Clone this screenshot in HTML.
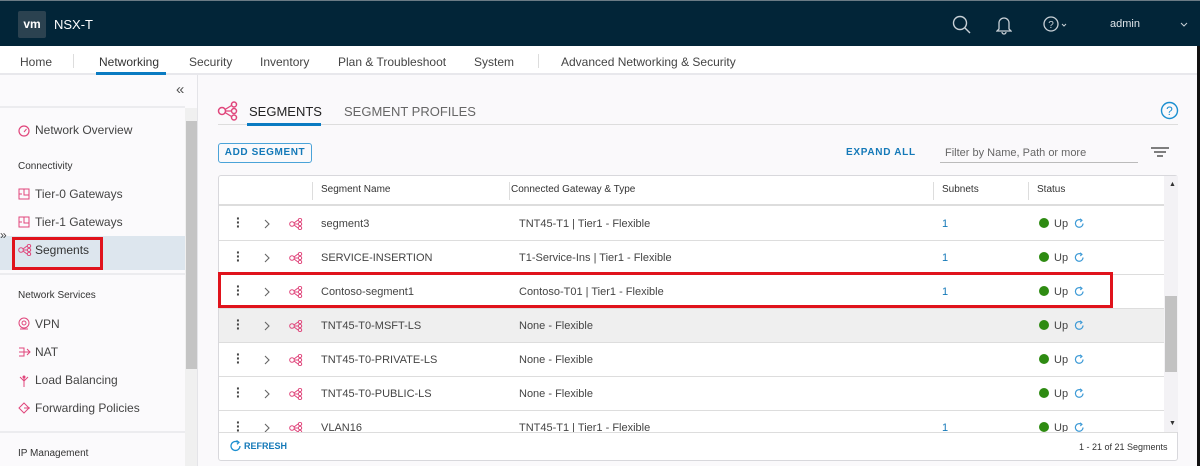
<!DOCTYPE html>
<html><head><meta charset="utf-8"><style>
*{margin:0;padding:0;box-sizing:border-box}
body{width:1200px;height:466px;overflow:hidden;background:#faf9fb;font-family:"Liberation Sans",sans-serif;position:relative;color:#333}
.a{position:absolute}
.hdr{left:0;top:0;width:1200px;height:46px;background:#022538;border-top:1px solid #6b7b85}
.nav{left:0;top:46px;width:1200px;height:29px;background:#fff;border-bottom:2px solid #e8e8ec}
.nav span{position:absolute;top:9px;font-size:12px;color:#444}
.side{left:0;top:75px;width:198px;height:391px;background:#fbfafc;border-right:1px solid #e4e4e8}
.si{position:absolute;font-size:12px;color:#444;left:35px}
.sh{position:absolute;font-size:10px;color:#333;left:18px}
.ic{position:absolute;left:18px}
.tbl{left:218px;top:175px;width:960px;height:286px;background:#fff;border:1px solid #d8d8dc;border-radius:3px}
.row{position:absolute;left:0;width:945px;height:34px;border-bottom:1px solid #ddd;font-size:11px;color:#444}
.row span{position:absolute;top:11px}
.dots{left:17px;top:9px!important;font-size:14px;line-height:4px;font-weight:bold;width:4px}
.g{display:inline-block;width:10px;height:10px;border-radius:50%;background:#2e8b12;vertical-align:-1px;margin-right:5px}
</style></head><body>
<div class="a hdr">
 <div class="a" style="left:18px;top:10px;width:28px;height:27px;background:#2b4250;border-radius:2px;color:#fff;font-weight:bold;font-size:12px;text-align:center;line-height:27px">vm</div>
 <div class="a" style="left:54px;top:16px;color:#fff;font-size:13px">NSX-T</div>
 <svg class="a" style="left:952px;top:14px" width="20" height="20"><circle cx="8" cy="8" r="6.5" fill="none" stroke="#c8d0d6" stroke-width="1.4"/><line x1="12.5" y1="12.5" x2="18" y2="18" stroke="#c8d0d6" stroke-width="1.4"/></svg>
 <svg class="a" style="left:996px;top:14px" width="16" height="20"><path d="M3 14 V8 A5 5 0 0 1 13 8 V14 L15 16 H1 Z M6 17 A2 2 0 0 0 10 17" fill="none" stroke="#c8d0d6" stroke-width="1.3"/></svg>
 <svg class="a" style="left:1043px;top:15px" width="28" height="18"><circle cx="8" cy="8" r="7" fill="none" stroke="#c8d0d6" stroke-width="1.3"/><text x="8" y="12" font-size="10" fill="#c8d0d6" text-anchor="middle" font-family="Liberation Sans">?</text><path d="M19 8 l2 2 l2 -2" fill="none" stroke="#c8d0d6"/></svg>
 <div class="a" style="left:1110px;top:17px;color:#dfe5e9;font-size:11px">admin</div>
 <svg class="a" style="left:1180px;top:21px" width="8" height="6"><path d="M1 1 l3 3 l3 -3" fill="none" stroke="#c8d0d6"/></svg>
</div>
<div class="a nav">
 <span style="left:20px">Home</span>
 <div class="a" style="left:73px;top:8px;width:1px;height:14px;background:#ddd"></div>
 <span style="left:99px;color:#333">Networking</span>
 <div class="a" style="left:96px;top:26px;width:70px;height:3px;background:#0a7bc2"></div>
 <span style="left:189px">Security</span>
 <span style="left:260px">Inventory</span>
 <span style="left:338px">Plan &amp; Troubleshoot</span>
 <span style="left:474px">System</span>
 <div class="a" style="left:538px;top:8px;width:1px;height:14px;background:#ddd"></div>
 <span style="left:561px">Advanced Networking &amp; Security</span>
</div>
<div class="a" style="left:1197px;top:46px;width:3px;height:420px;background:#111"></div>
<div class="a side">
 <div class="a" style="left:176px;top:6px;font-size:15px;color:#555">«</div>
 <div class="a" style="left:0;top:31px;width:185px;height:2px;background:#ececef"></div>
 <div class="a" style="left:185px;top:33px;width:12px;height:358px;background:#f0f0f0"></div>
 <div class="a" style="left:186px;top:46px;width:11px;height:248px;background:#c4c4c4"></div>
 <svg class="ic" style="top:50px" width="12" height="12"><circle cx="6" cy="6" r="5" fill="none" stroke="#e0457b" stroke-width="1.2"/><line x1="6" y1="7" x2="8.5" y2="4" stroke="#e0457b"/></svg>
 <div class="si" style="top:48px">Network Overview</div>
 <div class="sh" style="top:86px">Connectivity</div>
 <svg class="ic" style="top:113px" width="12" height="12"><rect x="1" y="1" width="10" height="10" fill="none" stroke="#e0457b"/><path d="M6 1v6h5M1 6h3" fill="none" stroke="#e0457b"/></svg>
 <div class="si" style="top:112px">Tier-0 Gateways</div>
 <svg class="ic" style="top:141px" width="12" height="12"><rect x="1" y="1" width="10" height="10" fill="none" stroke="#e0457b"/><path d="M6 1v6h5M1 6h3" fill="none" stroke="#e0457b"/></svg>
 <div class="si" style="top:140px">Tier-1 Gateways</div>
 <div class="a" style="left:0;top:161px;width:185px;height:34px;background:#dde6ee"></div>
 <div class="a" style="left:0;top:153px;font-size:12px;color:#444">»</div>
 <div class="a" style="left:12px;top:162px;width:91px;height:33px;border:3px solid #e0131c"></div>
 <svg class="ic" style="top:169px" width="14" height="12"><circle cx="3" cy="6" r="2.3" fill="none" stroke="#e0457b"/><circle cx="11" cy="2" r="1.7" fill="none" stroke="#e0457b"/><circle cx="11" cy="6" r="1.7" fill="none" stroke="#e0457b"/><circle cx="11" cy="10" r="1.7" fill="none" stroke="#e0457b"/><path d="M5 6h4M5 5l4-3M5 7l4 3" stroke="#e0457b" fill="none"/></svg>
 <div class="si" style="top:168px;color:#333">Segments</div>
 <div class="a" style="left:0;top:198px;width:185px;height:2px;background:#ececef"></div>
 <div class="sh" style="top:215px">Network Services</div>
 <svg class="ic" style="top:242px" width="12" height="13"><circle cx="6" cy="6" r="5" fill="none" stroke="#e0457b"/><circle cx="6" cy="6" r="2" fill="none" stroke="#e0457b"/><path d="M2 12h8" stroke="#e0457b"/></svg>
 <div class="si" style="top:242px">VPN</div>
 <svg class="ic" style="top:271px" width="13" height="12"><path d="M1 2h5v8H1M1 6h11M9 3l3 3l-3 3" fill="none" stroke="#e0457b"/></svg>
 <div class="si" style="top:270px">NAT</div>
 <svg class="ic" style="top:299px" width="12" height="13"><path d="M6 4v9M6 7l-4-4M6 7l4-4" fill="none" stroke="#e0457b"/><circle cx="6" cy="3" r="1.5" fill="#e0457b"/></svg>
 <div class="si" style="top:298px">Load Balancing</div>
 <svg class="ic" style="top:327px" width="13" height="13"><path d="M6 1l5 5l-5 5l-5-5zM6 6h6" fill="none" stroke="#e0457b"/></svg>
 <div class="si" style="top:326px">Forwarding Policies</div>
 <div class="a" style="left:0;top:356px;width:185px;height:2px;background:#ececef"></div>
 <div class="sh" style="top:373px">IP Management</div>
</div>
<svg class="a" style="left:217px;top:101px" width="22" height="20"><circle cx="5" cy="10" r="3.5" fill="none" stroke="#e0457b" stroke-width="1.5"/><circle cx="17" cy="3.5" r="2.5" fill="none" stroke="#e0457b" stroke-width="1.5"/><circle cx="17" cy="10" r="2.5" fill="none" stroke="#e0457b" stroke-width="1.5"/><circle cx="17" cy="16.5" r="2.5" fill="none" stroke="#e0457b" stroke-width="1.5"/><path d="M8.5 10h6M8 8.5l6.5-4M8 11.5l6.5 4" stroke="#e0457b" stroke-width="1.3" fill="none"/></svg>
<div class="a" style="left:249px;top:104px;font-size:13px;color:#222">SEGMENTS</div>
<div class="a" style="left:344px;top:104px;font-size:13px;color:#666">SEGMENT PROFILES</div>
<div class="a" style="left:218px;top:124px;width:960px;height:1px;background:#ddd"></div>
<div class="a" style="left:247px;top:123px;width:74px;height:3px;background:#0a7bc2"></div>
<svg class="a" style="left:1160px;top:101px" width="19" height="19"><circle cx="9.5" cy="9.5" r="8" fill="none" stroke="#1b8fd0" stroke-width="1.4"/><text x="9.5" y="14" font-size="12" fill="#1b8fd0" text-anchor="middle" font-family="Liberation Sans">?</text></svg>
<div class="a" style="left:218px;top:143px;width:94px;height:20px;border:1px solid #4aa3d8;border-radius:3px;font-size:10px;font-weight:bold;letter-spacing:.6px;color:#1479b8;text-align:center;line-height:18px">ADD SEGMENT</div>
<div class="a" style="left:846px;top:147px;font-size:10px;font-weight:bold;letter-spacing:.7px;color:#1479b8">EXPAND ALL</div>
<div class="a" style="left:940px;top:141px;width:198px;height:22px;border-bottom:1px solid #bbb;font-size:11px;color:#666;padding:6px 0 0 5px">Filter by Name, Path or more</div>
<svg class="a" style="left:1151px;top:147px" width="18" height="11"><path d="M0 1h18M3 5h12M6 9h6" stroke="#555" stroke-width="1.5"/></svg>
<div class="a tbl">
 <div class="a" style="left:0;top:0;width:945px;height:30px;border-bottom:2px solid #ddd;font-size:10px;color:#333">
  <div class="a" style="left:93px;top:6px;width:1px;height:18px;background:#ddd"></div>
  <span class="a" style="left:102px;top:8px">Segment Name</span>
  <div class="a" style="left:290px;top:6px;width:1px;height:18px;background:#ddd"></div>
  <span class="a" style="left:292px;top:8px">Connected Gateway &amp; Type</span>
  <div class="a" style="left:714px;top:6px;width:1px;height:18px;background:#ddd"></div>
  <span class="a" style="left:723px;top:8px">Subnets</span>
  <div class="a" style="left:809px;top:6px;width:1px;height:18px;background:#ddd"></div>
  <span class="a" style="left:818px;top:8px">Status</span>
 </div>
 <div class="a" style="left:945px;top:0;width:14px;height:256px;background:#f3f2f5"></div>
 <div class="a" style="left:946px;top:120px;width:12px;height:76px;background:#c2c2c2"></div>
 <div class="a" style="left:950px;top:5px;font-size:7px;color:#333">▲</div>
 <div class="a" style="left:950px;top:244px;font-size:7px;color:#333">▼</div>
 <div class="a" style="left:0;top:0;width:945px;height:256px;overflow:hidden"><div id="rows"></div></div>
 <div class="a" style="left:0;top:256px;width:958px;height:1px;background:#ddd"></div>
 <svg class="a" style="left:11px;top:264px" width="12" height="12"><path d="M10 6A4.5 4.5 0 1 1 8 2.2" fill="none" stroke="#1b8fd0" stroke-width="1.3"/><path d="M6.5 0.5l2.5 1.8l-2 2" fill="none" stroke="#1b8fd0" stroke-width="1.2"/></svg>
 <div class="a" style="left:25px;top:265px;font-size:9px;font-weight:bold;color:#1479b8">REFRESH</div>
 <div class="a" style="left:860px;top:266px;font-size:9px;color:#333">1 - 21 of 21 Segments</div>
</div>
<div class="a" style="left:218px;top:272px;width:895px;height:36px;border:3px solid #e0131c"></div>
<script>
var d=[["segment3","TNT45-T1 | Tier1 - Flexible","1",0],["SERVICE-INSERTION","T1-Service-Ins | Tier1 - Flexible","1",0],["Contoso-segment1","Contoso-T01 | Tier1 - Flexible","1",0],["TNT45-T0-MSFT-LS","None - Flexible","",1],["TNT45-T0-PRIVATE-LS","None - Flexible","",0],["TNT45-T0-PUBLIC-LS","None - Flexible","",0],["VLAN16","TNT45-T1 | Tier1 - Flexible","1",0]];
var ic='<svg style="position:absolute;left:70px;top:11px" width="14" height="12"><circle cx="3" cy="6" r="2.3" fill="none" stroke="#e0457b"/><circle cx="11" cy="2" r="1.7" fill="none" stroke="#e0457b"/><circle cx="11" cy="6" r="1.7" fill="none" stroke="#e0457b"/><circle cx="11" cy="10" r="1.7" fill="none" stroke="#e0457b"/><path d="M5 6h4M5 5l4-3M5 7l4 3" stroke="#e0457b" fill="none"/></svg>';
var ch='<svg style="position:absolute;left:44px;top:12px" width="8" height="10"><path d="M2 1l4 4l-4 4" fill="none" stroke="#666" stroke-width="1.1"/></svg>';
var rf='<svg style="display:inline-block;vertical-align:-2px;margin-left:6px" width="11" height="11"><path d="M9 5.5A3.8 3.8 0 1 1 7.3 2.3" fill="none" stroke="#3d9ad6" stroke-width="1.2"/><path d="M6 0.8l2 1.5l-1.7 1.7" fill="none" stroke="#3d9ad6" stroke-width="1.1"/></svg>';
var h='';d.forEach(function(r,i){var t=31+i*34;h+='<div class="row" style="top:'+t+'px;'+(r[3]?'background:#efefef':'')+'"><span class="dots">·<br>·<br>·</span>'+ch+ic+'<span style="left:102px">'+r[0]+'</span><span style="left:300px">'+r[1]+'</span><span style="left:723px;color:#1479b8">'+r[2]+'</span><span style="left:820px"><i class="g"></i>Up'+rf+'</span></div>';});
document.getElementById('rows').innerHTML=h;
</script>
</body></html>
